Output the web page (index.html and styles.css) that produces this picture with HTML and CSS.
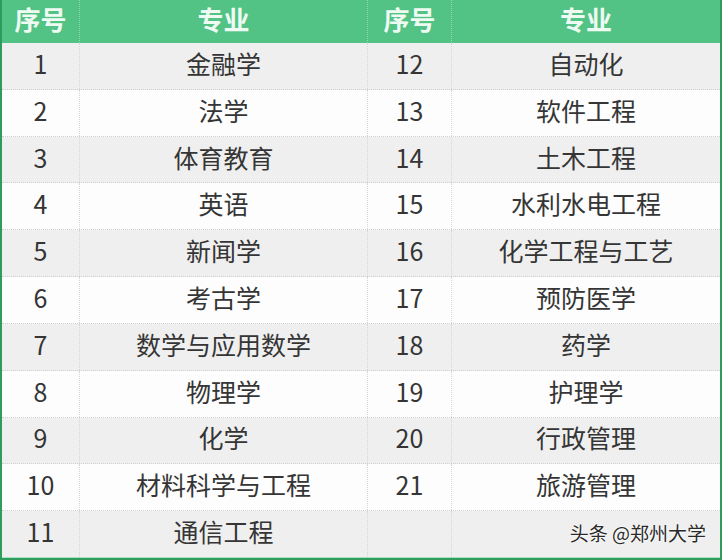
FILE: index.html
```html
<!DOCTYPE html>
<html lang="zh-CN">
<head>
<meta charset="utf-8">
<link rel="stylesheet" href="styles.css">
</head>
<body>
<div class="sheet">
  <div class="row head">
    <div class="cell">序号</div><div class="cell">专业</div><div class="cell">序号</div><div class="cell">专业</div>
  </div>
  <div class="row odd"><div class="cell">1</div><div class="cell">金融学</div><div class="cell">12</div><div class="cell">自动化</div></div>
  <div class="row"><div class="cell">2</div><div class="cell">法学</div><div class="cell">13</div><div class="cell">软件工程</div></div>
  <div class="row odd"><div class="cell">3</div><div class="cell">体育教育</div><div class="cell">14</div><div class="cell">土木工程</div></div>
  <div class="row"><div class="cell">4</div><div class="cell">英语</div><div class="cell">15</div><div class="cell">水利水电工程</div></div>
  <div class="row odd"><div class="cell">5</div><div class="cell">新闻学</div><div class="cell">16</div><div class="cell">化学工程与工艺</div></div>
  <div class="row"><div class="cell">6</div><div class="cell">考古学</div><div class="cell">17</div><div class="cell">预防医学</div></div>
  <div class="row odd"><div class="cell">7</div><div class="cell">数学与应用数学</div><div class="cell">18</div><div class="cell">药学</div></div>
  <div class="row"><div class="cell">8</div><div class="cell">物理学</div><div class="cell">19</div><div class="cell">护理学</div></div>
  <div class="row odd"><div class="cell">9</div><div class="cell">化学</div><div class="cell">20</div><div class="cell">行政管理</div></div>
  <div class="row"><div class="cell">10</div><div class="cell">材料科学与工程</div><div class="cell">21</div><div class="cell">旅游管理</div></div>
  <div class="row odd last"><div class="cell">11</div><div class="cell">通信工程</div><div class="cell"></div><div class="cell"></div></div>
  <div class="watermark">头条 @郑州大学</div>
</div>
</body>
</html>
```
FILE: styles.css
```css
html, body {
  margin: 0;
  padding: 0;
  background: #ffffff;
}
.sheet {
  position: relative;
  width: 722px;
  height: 560px;
  box-sizing: border-box;
  border-left: 2px solid #2f9c5d;
  border-right: 2px solid #2f9c5d;
  border-bottom: 2px solid #2f9c5d;
  box-shadow: inset 1px 0 0 #a6e3c0, inset -1px 0 0 #a6e3c0, inset 0 -1px 0 #a6e3c0;
  display: flex;
  flex-direction: column;
  font-family: "Noto Sans CJK SC", "Noto Sans", sans-serif;
  color: #353535;
  font-size: 25px;
}
.row {
  display: grid;
  grid-template-columns: 78px 288px 84px 1fr;
  flex: 1 1 0;
  background: #fdfdfd;
  border-bottom: 1px dotted #cfcfcf;
}
.row.odd {
  background: #efefef;
}
.row.last {
  border-bottom: none;
  margin-bottom: 1px;
}
.row.head {
  flex: 0 0 43px;
  background: #53c285;
  color: #eefbf3;
  font-weight: bold;
  font-size: 26px;
  border-bottom: none;
}
.cell {
  display: flex;
  align-items: center;
  justify-content: center;
  border-right: 1px dotted #d6d6d6;
  line-height: 1;
  padding-bottom: 5px;
}
.cell:last-child {
  border-right: none;
}
.head .cell {
  border-right: 1px dotted #8fd9ae;
  padding-bottom: 5px;
}
.head .cell:last-child {
  border-right: none;
}
.watermark {
  position: absolute;
  right: 14px;
  bottom: 16px;
  font-size: 19px;
  color: #2a2a2a;
  text-shadow: 0 0 2px #ffffff, 0 0 2px #ffffff;
  line-height: 1;
}
```
